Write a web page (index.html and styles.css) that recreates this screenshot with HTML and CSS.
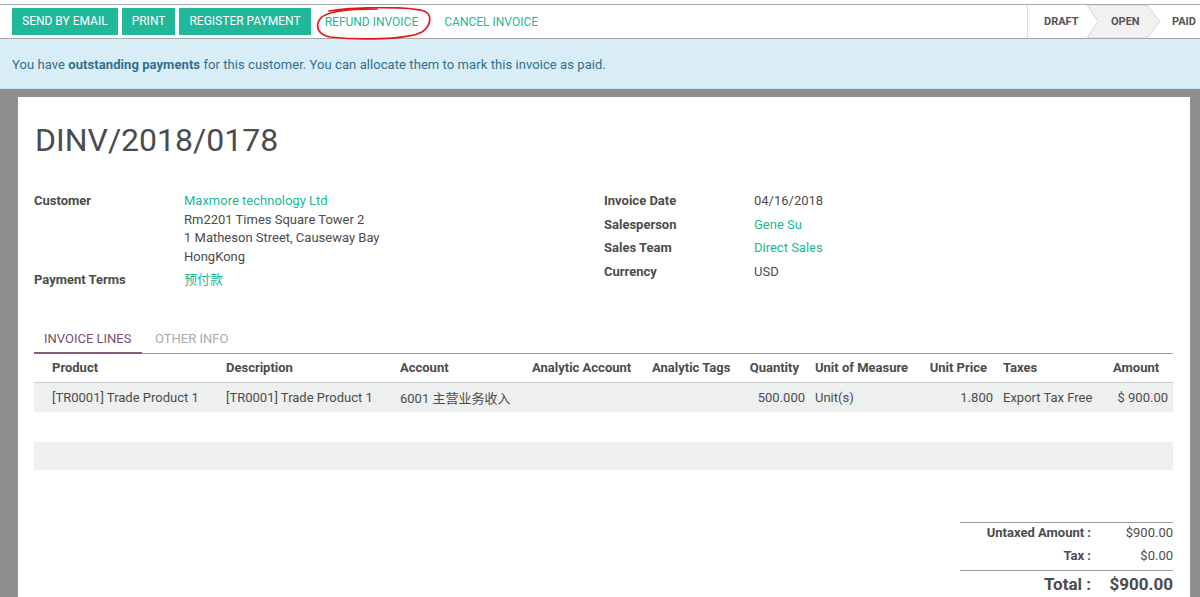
FILE: index.html
```html
<!DOCTYPE html>
<html>
<head>
<meta charset="utf-8">
<link rel="stylesheet" href="styles.css">
</head>
<body>
<div class="top-gap"></div>
<div class="statusbar">
  <div class="actions">
    <button class="btn">SEND BY EMAIL</button>
    <button class="btn">PRINT</button>
    <button class="btn">REGISTER PAYMENT</button>
    <span class="link refund">REFUND INVOICE
      <svg class="circle" width="118" height="33" viewBox="0 0 118 33"><path d="M14 4 C 40 0, 92 -1, 109 4 C 117 7, 117 18, 107 25 C 92 33, 42 33, 15 30 C 3 28, 0 19, 5 12 C 9 6, 28 2, 62 2" fill="none" stroke="#e0181b" stroke-width="1.7" stroke-linecap="round"/></svg>
    </span>
    <span class="link">CANCEL INVOICE</span>
  </div>
  <div class="stages">
    <div class="stage">DRAFT</div>
    <div class="stage current">
      <svg class="arrow" width="76" height="33" viewBox="0 0 76 33"><polygon points="0,0 60,0 73,16.5 60,33 0,33 11,16.5" fill="#f1f1f1" stroke="#d4d4d4" stroke-width="1"/></svg>
      <span>OPEN</span>
    </div>
    <div class="stage last">PAID</div>
  </div>
</div>
<div class="alert">You have <b>outstanding payments</b> for this customer. You can allocate them to mark this invoice as paid.</div>
<div class="view">
  <div class="sheet">
    <h1 class="title">DINV/2018/0178</h1>
    <div class="groups">
      <div class="group">
        <div class="row">
          <div class="label">Customer</div>
          <div class="value"><span class="a">Maxmore technology Ltd</span><br>Rm2201 Times Square Tower 2<br>1 Matheson Street, Causeway Bay<br>HongKong</div>
        </div>
        <div class="row">
          <div class="label">Payment Terms</div>
          <div class="value a">预付款</div>
        </div>
      </div>
      <div class="group">
        <div class="row"><div class="label">Invoice Date</div><div class="value">04/16/2018</div></div>
        <div class="row"><div class="label">Salesperson</div><div class="value a">Gene Su</div></div>
        <div class="row"><div class="label">Sales Team</div><div class="value a">Direct Sales</div></div>
        <div class="row"><div class="label">Currency</div><div class="value">USD</div></div>
      </div>
    </div>
    <div class="tabs">
      <div class="tab active">INVOICE LINES</div>
      <div class="tab other">OTHER INFO</div>
    </div>
    <table class="lines">
      <colgroup>
        <col class="c-prod"><col class="c-desc"><col class="c-acc"><col class="c-aa"><col class="c-tags"><col class="c-qty"><col class="c-uom"><col class="c-price"><col class="c-tax"><col class="c-amt">
      </colgroup>
      <thead>
        <tr>
          <th class="first">Product</th><th>Description</th><th>Account</th><th>Analytic Account</th><th>Analytic Tags</th><th class="num">Quantity</th><th>Unit of Measure</th><th class="num">Unit Price</th><th>Taxes</th><th class="num last">Amount</th>
        </tr>
      </thead>
      <tbody>
        <tr class="odd">
          <td class="first">[TR0001] Trade Product 1</td><td>[TR0001] Trade Product 1</td><td>6001 主营业务收入</td><td></td><td></td><td class="num">500.000</td><td>Unit(s)</td><td class="num">1.800</td><td>Export Tax Free</td><td class="num">$ 900.00</td>
        </tr>
        <tr class="even"><td colspan="10"></td></tr>
        <tr class="odd empty"><td colspan="10"></td></tr>
      </tbody>
    </table>
    <div class="totals-wrap">
      <table class="totals">
        <tr class="r1"><td class="tl">Untaxed Amount :</td><td class="tv">$900.00</td></tr>
        <tr class="r2"><td class="tl">Tax :</td><td class="tv">$0.00</td></tr>
        <tr class="grand"><td class="tl">Total :</td><td class="tv">$900.00</td></tr>
      </table>
    </div>
  </div>
</div>
</body>
</html>
```
FILE: styles.css
```css
* { box-sizing: border-box; }
html, body { margin: 0; padding: 0; }
body {
  font-family: Roboto, "Noto Sans CJK SC", sans-serif;
  font-size: 13px;
  color: #4c4c4c;
  background: #8f8f8f;
  overflow: hidden;
}
.top-gap { height: 4px; background: #fff; }
.statusbar {
  background: #fff;
  border-top: 1px solid #a8a8a8;
  border-bottom: 1px solid #a8a8a8;
  height: 35px;
  display: flex;
  justify-content: space-between;
  align-items: stretch;
}
.actions {
  display: flex;
  align-items: center;
  gap: 4px;
  padding-left: 12px;
}
.btn {
  font-family: Roboto, sans-serif;
  font-size: 12px;
  color: #fff;
  background: #21b799;
  border: 0;
  height: 27px;
  padding: 0 10px;
  margin: 0;
  line-height: 27px;
}
.link {
  color: #21b799;
  font-size: 12px;
  padding: 0 10px;
  position: relative;
  align-self: stretch;
  display: flex;
  align-items: center;
}
.refund { margin-right: 2px; }
.circle { position: absolute; left: 0; top: 2px; }
.stages {
  display: flex;
  border-left: 1px solid #dcdcdc;
  height: 33px;
}
.stage {
  position: relative;
  font-weight: 700;
  font-size: 11px;
  color: #555;
  display: flex;
  align-items: center;
  padding: 0 0 0 16px;
}
.stage:first-child { width: 59px; }
.stage.current { width: 85px; padding-left: 24px; }
.stage.current span { position: relative; }
.arrow { position: absolute; left: 0; top: 0; }
.stage.last { padding-left: 0; width: 28px; }
.alert {
  background: #d9edf7;
  color: #31708f;
  border-bottom: 1px solid #bce8f1;
  height: 50px;
  padding: 1px 12px 0;
  line-height: 49px;
  letter-spacing: 0.07px;
}
.alert b { font-weight: 700; }
.view {
  padding: 8px 10px 0 18px;
}
.sheet {
  background: #fff;
  padding: 20px 16px 40px 16px;
  min-height: 600px;
}
.title {
  font-size: 32px;
  font-weight: 400;
  margin: 0 0 29px 1px;
  line-height: 46px;
  color: #4c4c4c;
}
.groups { display: flex; }
.group { width: 570px; }
.row { display: flex; line-height: 18.5px; margin-bottom: 5px; }
.label { width: 150px; font-weight: 700; flex: none; }
.a { color: #21b799; }
.tabs {
  margin-top: 30px;
  display: flex;
  border-bottom: 1px solid #9a9a9a;
  width: 1139px;
}
.tab {
  padding: 0 10px;
  line-height: 27px;
  color: #aaa;
  font-size: 13px;
}
.tab.other { margin-left: 3px; }
.tab.active {
  color: #7c4e72;
  border-bottom: 2px solid #875a7b;
  margin-bottom: -1px;
  width: 108px;
}
.lines {
  width: 1139px;
  border-collapse: collapse;
  table-layout: fixed;
}
.c-prod { width: 187px; }
.c-desc { width: 174px; }
.c-acc { width: 132px; }
.c-aa { width: 120px; }
.c-tags { width: 97px; }
.c-qty { width: 66px; }
.c-uom { width: 113px; }
.c-price { width: 75px; }
.c-tax { width: 110px; }
.c-amt { width: 65px; }
.lines th {
  font-weight: 700;
  text-align: left;
  padding: 0 5px;
  height: 29px;
  border-bottom: 1px solid #cfcfcf;
  white-space: nowrap;
}
.lines th.num { text-align: right; padding-right: 11px; }
.lines th.last { padding-right: 15px; }
.lines th.first, .lines td.first { padding-left: 18px; }
.lines td {
  padding: 0 5px;
  height: 29px;
  white-space: nowrap;
}
.lines td.num { text-align: right; padding-right: 5px; }
.lines tr.odd td { background: #eeefef; }
.lines tr.even td { height: 30px; }
.lines tr.empty td { height: 28px; }
.totals-wrap {
  display: flex;
  justify-content: flex-end;
  margin-top: 52px;
  width: 1139px;
}
.totals {
  width: 213px;
  border-collapse: collapse;
}
.totals td { padding: 0; white-space: nowrap; vertical-align: top; line-height: 16px; }
.totals tr.r1 td { border-top: 1px solid #9a9a9a; height: 22px; padding-top: 2px; }
.totals tr.r2 td { height: 26px; padding-top: 4px; }
.tl { text-align: right; font-weight: 700; }
.tv { text-align: right; width: 82px; }
.totals tr.grand td {
  border-top: 1px solid #9a9a9a;
  font-size: 17px;
  font-weight: 700;
  line-height: 26px;
  height: 26px;
}
```
